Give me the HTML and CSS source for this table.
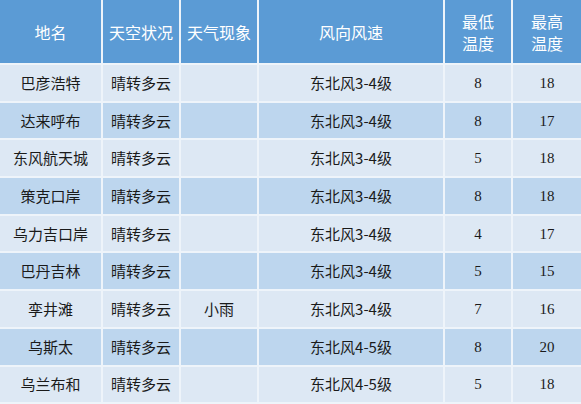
FILE: index.html
```html
<!DOCTYPE html>
<html lang="zh">
<head>
<meta charset="utf-8">
<link rel="stylesheet" href="styles.css">
</head>
<body>
<table class="wx">
  <colgroup>
    <col class="c1"><col class="c2"><col class="c3"><col class="c4"><col class="c5"><col class="c6">
  </colgroup>
  <thead>
    <tr><th>地名</th><th>天空状况</th><th>天气现象</th><th>风向风速</th><th>最低<br>温度</th><th>最高<br>温度</th></tr>
  </thead>
  <tbody>
    <tr><td>巴彦浩特</td><td>晴转多云</td><td></td><td>东北风3-4级</td><td class="n">8</td><td class="n">18</td></tr>
    <tr><td>达来呼布</td><td>晴转多云</td><td></td><td>东北风3-4级</td><td class="n">8</td><td class="n">17</td></tr>
    <tr><td>东风航天城</td><td>晴转多云</td><td></td><td>东北风3-4级</td><td class="n">5</td><td class="n">18</td></tr>
    <tr><td>策克口岸</td><td>晴转多云</td><td></td><td>东北风3-4级</td><td class="n">8</td><td class="n">18</td></tr>
    <tr><td>乌力吉口岸</td><td>晴转多云</td><td></td><td>东北风3-4级</td><td class="n">4</td><td class="n">17</td></tr>
    <tr><td>巴丹吉林</td><td>晴转多云</td><td></td><td>东北风3-4级</td><td class="n">5</td><td class="n">15</td></tr>
    <tr><td>孪井滩</td><td>晴转多云</td><td>小雨</td><td>东北风3-4级</td><td class="n">7</td><td class="n">16</td></tr>
    <tr><td>乌斯太</td><td>晴转多云</td><td></td><td>东北风4-5级</td><td class="n">8</td><td class="n">20</td></tr>
    <tr><td>乌兰布和</td><td>晴转多云</td><td></td><td>东北风4-5级</td><td class="n">5</td><td class="n">18</td></tr>
  </tbody>
</table>
</body>
</html>
```

FILE: styles.css
```css
html, body {
  margin: 0;
  padding: 0;
  background: #ffffff;
}
body {
  width: 581px;
  height: 404px;
  overflow: hidden;
}
.wx {
  width: 581px;
  border-collapse: collapse;
  table-layout: fixed;
  font-family: "Noto Sans CJK SC", "Liberation Sans", sans-serif;
  font-size: 15px;
  color: #1a1a1a;
}
.c1 { width: 102px; }
.c2 { width: 78px; }
.c3 { width: 78px; }
.c4 { width: 186px; }
.c5 { width: 68px; }
.c6 { width: 69px; }
.wx th, .wx td {
  padding: 0;
  text-align: center;
  vertical-align: middle;
  border: 2px solid #eef4fa;
}
.wx tr > :first-child { border-left: none; }
.wx tr > :last-child { border-right: none; }
.wx thead th {
  height: 63px;
  background: #5b9bd5;
  color: #ffffff;
  font-weight: normal;
  font-size: 16px;
  line-height: 22px;
  border-top: none;
}
.wx tbody td {
  height: 35.7px;
  line-height: 20px;
}
.wx tbody tr:nth-child(odd) td { background: #dde8f4; }
.wx tbody tr:nth-child(even) td { background: #bdd6ee; }
.wx td.n {
  font-family: "Liberation Serif", serif;
  font-size: 15px;
}
```
